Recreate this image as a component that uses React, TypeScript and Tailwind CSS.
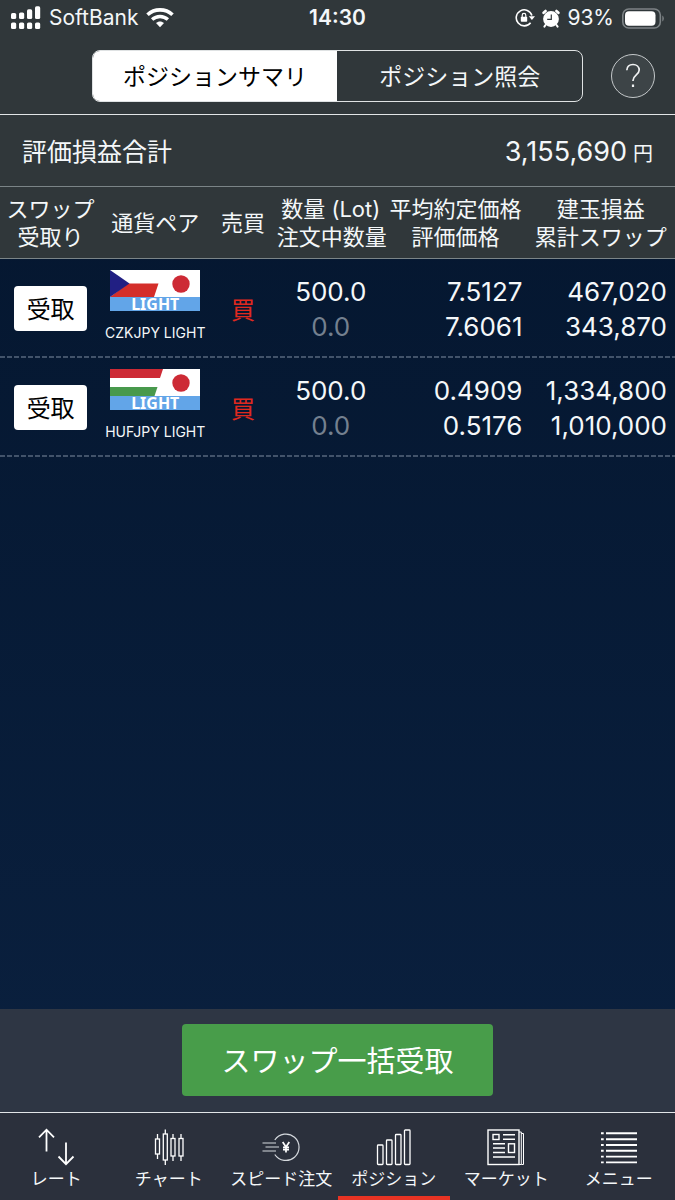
import React from "react";

type Position = {
  pair: string;
  flag: "cz" | "hu";
  lots: string;
  pending: string;
  average: string;
  current: string;
  profit: string;
  swap: string;
};

const positions: Position[] = [
  { pair: "CZKJPY LIGHT", flag: "cz", lots: "500.0", pending: "0.0", average: "7.5127", current: "7.6061", profit: "467,020", swap: "343,870" },
  { pair: "HUFJPY LIGHT", flag: "hu", lots: "500.0", pending: "0.0", average: "0.4909", current: "0.5176", profit: "1,334,800", swap: "1,010,000" },
];

function SignalIcon() {
  return (
    <svg width="30" height="24" viewBox="0 0 30 24" fill="#fff" aria-hidden="true">
      <rect x="0" y="7" width="5.2" height="6" rx="1.6" />
      <rect x="8" y="6.5" width="5.2" height="6.5" rx="1.6" />
      <rect x="16" y="3.3" width="5.2" height="9.7" rx="1.6" />
      <rect x="24" y="0.3" width="5.2" height="12.7" rx="1.6" />
      <rect x="0" y="16.5" width="5.2" height="6.5" rx="1.6" />
      <rect x="8" y="16.5" width="5.2" height="6.5" rx="1.6" />
      <rect x="16" y="16.5" width="5.2" height="6.5" rx="1.6" />
      <rect x="24" y="16.5" width="5.2" height="6.5" rx="1.6" />
    </svg>
  );
}

function WifiIcon() {
  return (
    <svg width="28" height="20" viewBox="0 0 28 20" fill="none" stroke="#fff" aria-hidden="true">
      <path d="M1.5 6.8C8.5 .2 19.5 .2 26.5 6.8" strokeWidth="3.6" />
      <path d="M6.1 11.6C10.6 7.5 17.4 7.5 21.9 11.6" strokeWidth="3.4" />
      <path d="M14 19.2L10 15.1C12.3 13 15.7 13 18 15.1Z" fill="#fff" stroke="none" />
    </svg>
  );
}

function RotationLockIcon() {
  return (
    <svg width="20" height="20" viewBox="0 0 20 20" fill="none" stroke="#fff" aria-hidden="true">
      <path d="M15.6 14.7A8 8 0 1 1 16.9 7.5" strokeWidth="1.6" />
      <path d="M13.8 8.2H20L16.9 12Z" fill="#fff" stroke="none" />
      <rect x="5.8" y="8.8" width="6.4" height="5" rx=".8" fill="#fff" stroke="none" />
      <path d="M7.2 9V7.2a1.8 1.8 0 0 1 3.6 0V9" strokeWidth="1.2" />
    </svg>
  );
}

function AlarmIcon() {
  return (
    <svg width="18" height="19" viewBox="0 0 18 19" aria-hidden="true">
      <circle cx="9" cy="10" r="7.9" fill="#fff" />
      <path d="M1.6 3.8L3.6 2M16.4 3.8L14.4 2" stroke="#fff" strokeWidth="2.6" strokeLinecap="round" />
      <path d="M3.5 16L2.4 17.6M14.5 16L15.6 17.6" stroke="#fff" strokeWidth="2" strokeLinecap="round" />
      <path d="M9.3 5.5V10.4H5.2" fill="none" stroke="#30373a" strokeWidth="1.2" />
    </svg>
  );
}

function BatteryIcon() {
  return (
    <svg width="43" height="21" viewBox="0 0 43 21" aria-hidden="true">
      <rect x="1.8" y="1" width="37.5" height="19" rx="6" fill="none" stroke="#7d8386" strokeWidth="1.6" />
      <rect x="4" y="3.2" width="30.5" height="14.6" rx="4" fill="#fff" />
      <path d="M41.3 7.5C43.3 8.5 43.3 12.5 41.3 13.5Z" fill="#7d8386" />
    </svg>
  );
}

function PairFlag({ kind }: { kind: "cz" | "hu" }) {
  return (
    <div className="w-[90px] bg-[#62a5e8]">
      <svg width="90" height="27" viewBox="0 0 90 27" className="block" aria-hidden="true">
        <rect width="90" height="27" fill="#fff" />
        {kind === "cz" ? (
          <>
            <path d="M0 27L18 13.5H48.5L44 27Z" fill="#d42e2a" />
            <path d="M0 0L19.5 13.5L0 27Z" fill="#211f83" />
          </>
        ) : (
          <>
            <path d="M0 0H53L50 9H0Z" fill="#cd2a35" />
            <path d="M0 18H47.5L44.5 27H0Z" fill="#48994c" />
          </>
        )}
        <circle cx="71" cy="14" r="8.7" fill="#cd2a35" />
      </svg>
      <p className="text-center font-['Noto_Sans',sans-serif] text-base leading-[14px] font-bold text-white">LIGHT</p>
    </div>
  );
}

function RateIcon() {
  return (
    <svg width="38" height="38" viewBox="0 0 38 38" fill="none" stroke="#fff" strokeWidth="1.8" aria-hidden="true">
      <path d="M9.5 23.5V2M2 9.3L9.5 1.7L17 9.3" />
      <path d="M29 14.5V36M21.5 28.5L29 36.2L36.5 28.5" />
    </svg>
  );
}

function ChartIcon() {
  return (
    <svg width="38" height="38" viewBox="0 0 38 38" fill="none" stroke="#fff" strokeWidth="1.3" aria-hidden="true">
      <path d="M7.5 6V11M7.5 26V31M15.3 1.5V6M15.3 32V37M23 6V10.5M23 28V33M31 6V10.5M31 28V33" />
      <rect x="5.5" y="11" width="4" height="15" />
      <rect x="13.3" y="6" width="4" height="26" />
      <rect x="21" y="10.5" width="4" height="17.5" />
      <rect x="29" y="10.5" width="4" height="17.5" />
    </svg>
  );
}

function SpeedIcon() {
  return (
    <svg width="38" height="38" viewBox="0 0 38 38" fill="none" stroke="#d5d9de" strokeWidth="1.2" aria-hidden="true">
      <path d="M12.8 12A13.2 13.2 0 1 1 12.8 26.5" />
      <path d="M.5 15H14M3.5 19H17M.5 23H14" />
      <path d="M20.7 14L24 19L27.3 14M24 19V24.5M21 19.3H27M21 21.7H27" stroke="#fff" strokeWidth="1.7" />
    </svg>
  );
}

function PositionIcon() {
  return (
    <svg width="38" height="38" viewBox="0 0 38 38" fill="none" stroke="#fff" strokeWidth="1.3" aria-hidden="true">
      <rect x="2.5" y="17" width="5.5" height="19.5" rx=".8" />
      <rect x="11.5" y="12" width="5.5" height="24.5" rx=".8" />
      <rect x="20.5" y="6.5" width="5.5" height="30" rx=".8" />
      <rect x="29.5" y="2" width="5.5" height="34.5" rx=".8" />
    </svg>
  );
}

function MarketIcon() {
  return (
    <svg width="38" height="38" viewBox="0 0 38 38" fill="none" stroke="#fff" strokeWidth="1.4" aria-hidden="true">
      <rect x="1" y="2" width="31" height="34.5" />
      <path d="M32 4H34.3V36.5H32M34.3 5.5H36.5V36.5H34.3" strokeWidth="1" />
      <rect x="6" y="6.5" width="6" height="5" />
      <path d="M16 6.8H28M16 11.3H28M6 15.8H18M6 20H18M6 24.5H18M6 29H28" />
      <rect x="21.5" y="15.8" width="6" height="8.7" />
    </svg>
  );
}

function MenuIcon() {
  return (
    <svg width="38" height="38" viewBox="0 0 38 38" stroke="#fff" strokeWidth="1.9" aria-hidden="true">
      {[5.3, 11.2, 17, 22.8, 28.6, 34.4].map((y) => (
        <path key={y} d={`M1 ${y}H3.7M6 ${y}H37`} />
      ))}
    </svg>
  );
}

const navItems = [
  { label: "レート", icon: <RateIcon /> },
  { label: "チャート", icon: <ChartIcon /> },
  { label: "スピード注文", icon: <SpeedIcon /> },
  { label: "ポジション", icon: <PositionIcon />, active: true },
  { label: "マーケット", icon: <MarketIcon /> },
  { label: "メニュー", icon: <MenuIcon /> },
];

export default function App() {
  return (
    <div className="flex min-h-screen flex-col bg-linear-to-b from-[#04152d] to-[#0b2140] font-['Inter','Noto_Sans_CJK_JP',sans-serif] text-[#f4f7f9]">
      <header className="bg-[#30373a]">
        <div className="grid h-9 grid-cols-3 items-center px-[11px] text-[21px]">
          <div className="flex items-center gap-2">
            <SignalIcon />
            <span>SoftBank</span>
            <WifiIcon />
          </div>
          <div className="text-center font-semibold">14:30</div>
          <div className="flex items-center justify-end gap-[7px]">
            <RotationLockIcon />
            <AlarmIcon />
            <span>93%</span>
            <BatteryIcon />
          </div>
        </div>
        <div className="flex h-[79px] items-center border-b border-[#e2e5e6] pt-0.5 pr-5">
          <div
            className="ml-auto grid h-13 w-[75%] shrink-0 grid-cols-2 overflow-hidden rounded-lg border border-[#dfe2e3] font-['Noto_Sans_CJK_JP',sans-serif] text-[23px]"
            role="tablist"
          >
            <button type="button" role="tab" aria-selected="true" className="bg-white pb-0.5 text-black">
              ポジションサマリ
            </button>
            <button type="button" role="tab" aria-selected="false" className="pb-0.5">
              ポジション照会
            </button>
          </div>
          <button type="button" aria-label="ヘルプ" className="ml-7 flex size-11 shrink-0 items-center justify-center rounded-full border border-[#c4c8ca] bg-[#3d4447]">
            <svg width="16" height="26" viewBox="0 0 16 26" fill="none" stroke="#f0f2f3" strokeWidth="1.7" aria-hidden="true">
              <path d="M1.8 7.2C2 3.5 4.5 1.5 8 1.5S14.2 3.8 14.2 7.1C14.2 11.8 8 12 8 17.5V18" />
              <path d="M8 21.5V24" strokeWidth="2.2" />
            </svg>
          </button>
        </div>
      </header>

      <main className="flex flex-1 flex-col">
        <section className="flex h-18 items-center justify-between border-b border-[#7b8487] bg-[#30373a] px-[22px]">
          <h1 className="font-['Noto_Sans_CJK_JP',sans-serif] text-[25px]">評価損益合計</h1>
          <p className="flex items-baseline gap-1.5 pt-1 text-[27px]">
            3,155,690 <span className="text-xl">円</span>
          </p>
        </section>

        <table className="w-full table-fixed border-separate border-spacing-0">
          <thead className="bg-[#30373a] text-[22px] leading-7">
            <tr className="h-18 *:border-b *:border-[#7b8487] *:p-0 *:font-normal *:whitespace-nowrap">
              <th className="w-[15%]">スワップ<br />受取り</th>
              <th className="w-[16%]">通貨ペア</th>
              <th className="w-[10%]">売買</th>
              <th className="w-[16%]">数量 (Lot)<br />注文中数量</th>
              <th className="w-[21%]">平均約定価格<br />評価価格</th>
              <th className="w-[22%]">建玉損益<br />累計スワップ</th>
            </tr>
          </thead>
          <tbody className="text-[26px] leading-[35px]">
            {positions.map((p) => (
              <tr key={p.pair} className="h-[99px] bg-[repeating-linear-gradient(90deg,#42536a_0px,#42536a_5px,transparent_5px,transparent_7px)] bg-[length:100%_2px] bg-bottom bg-no-repeat">
                <td className="p-0 text-center">
                  <button type="button" className="h-[45px] w-[73px] rounded bg-white pb-0.5 align-middle font-['Noto_Sans_CJK_JP',sans-serif] text-2xl text-black">
                    受取
                  </button>
                </td>
                <td className="p-0 pb-1">
                  <div className="flex flex-col items-center gap-3">
                    <PairFlag kind={p.flag} />
                    <span className="text-sm whitespace-nowrap">{p.pair}</span>
                  </div>
                </td>
                <td className="p-0 text-center font-['Noto_Sans_CJK_JP',sans-serif] text-2xl text-[#e0291f]">買</td>
                <td className="p-0 text-center">
                  <div>{p.lots}</div>
                  <div className="text-[#74808f]">{p.pending}</div>
                </td>
                <td className="p-0 pr-1 text-right">
                  <div>{p.average}</div>
                  <div>{p.current}</div>
                </td>
                <td className="p-0 pr-2 text-right">
                  <div>{p.profit}</div>
                  <div>{p.swap}</div>
                </td>
              </tr>
            ))}
          </tbody>
        </table>
      </main>

      <footer>
        <div className="flex h-[103px] items-center justify-center bg-[#2e3644] pb-0.5">
          <button type="button" className="h-18 w-[46%] rounded bg-[#489d4a] font-['Noto_Sans_CJK_JP',sans-serif] text-[29px] text-white">
            スワップ一括受取
          </button>
        </div>
        <nav className="grid h-22 grid-cols-6 border-t border-[#e2e5e8] bg-[#2b303c]">
          {navItems.map((item) => (
            <a
              key={item.label}
              href="#"
              aria-current={item.active ? "page" : undefined}
              className={`flex flex-col items-center border-b-4 pt-[15px] text-[17px] leading-[26px] whitespace-nowrap ${item.active ? "border-[#e83323]" : "border-transparent"}`}
            >
              {item.icon}
              <span>{item.label}</span>
            </a>
          ))}
        </nav>
      </footer>
    </div>
  );
}
